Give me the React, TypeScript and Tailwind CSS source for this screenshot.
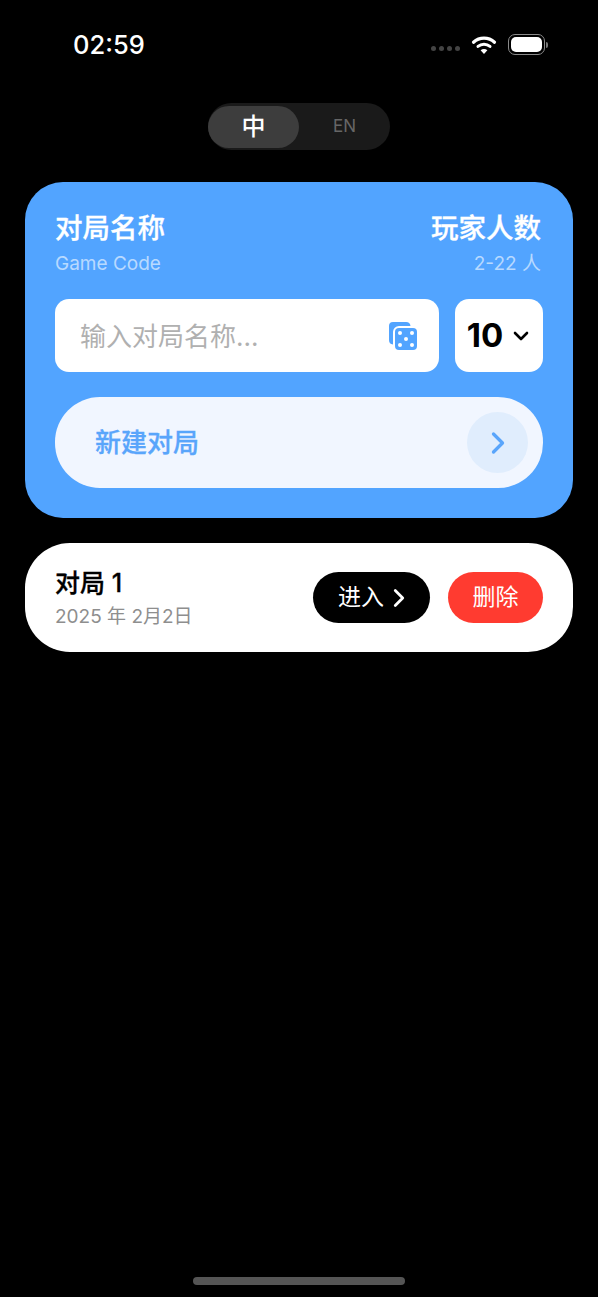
import { ChevronDown, ChevronRight } from "lucide-react";

const FONT = "font-['Inter','Noto_Sans_CJK_SC',sans-serif]";

function Wifi() {
  return (
    <svg width="26" height="20" viewBox="0 0 26 20" fill="none" stroke="white" strokeLinecap="round">
      <path d="M2.500 7.200C8.500 1.800 17.500 1.800 23.500 7.200" strokeWidth="3.200" />
      <path d="M7 11.400C10.500 8.400 15.500 8.400 19 11.400" strokeWidth="3" />
      <path d="M13 19L9.600 15.300C11.600 13.700 14.400 13.700 16.400 15.300Z" fill="white" stroke="none" />
    </svg>
  );
}

function Battery() {
  return (
    <div className="flex items-center">
      <div className="flex h-[21px] w-[37px] rounded-[7px] border border-[#8a8a8a] p-[2px]">
        <div className="flex-1 rounded-[5px] bg-white" />
      </div>
      <div className="ml-[1px] h-[6px] w-[2px] rounded-r-full bg-[#777]" />
    </div>
  );
}

function Dice() {
  return (
    <svg width="30" height="30" viewBox="0 0 30 30" fill="none">
      <path d="M5 1h13a4.500 4.500 0 0 1 4.500 4H11a6 6 0 0 0-6 6v12.500A4.500 4.500 0 0 1 1 19V5a4 4 0 0 1 4-4z" fill="#52a4ff" />
      <rect x="7" y="7" width="22" height="22" rx="4" fill="#52a4ff" />
      <circle cx="12" cy="12" r="2" fill="white" />
      <circle cx="24" cy="12" r="2" fill="white" />
      <circle cx="18" cy="18" r="2" fill="white" />
      <circle cx="12" cy="24" r="2" fill="white" />
      <circle cx="24" cy="24" r="2" fill="white" />
    </svg>
  );
}

export default function App() {
  return (
    <div className={`flex h-[1297px] w-full flex-col bg-black ${FONT}`}>
      {/* status bar */}
      <div className="flex h-[103px] items-start justify-between pl-[73px] pr-[50px] pt-[29px]">
        <span className="text-[25.500px] leading-[32px] font-medium text-white">02:59</span>
        <div className="flex items-center pt-[5px]">
          <div className="mr-[11px] mt-[8px] flex gap-[3px]">
            <span className="h-[5px] w-[5px] rounded-full bg-[#444]" />
            <span className="h-[5px] w-[5px] rounded-full bg-[#444]" />
            <span className="h-[5px] w-[5px] rounded-full bg-[#444]" />
            <span className="h-[5px] w-[5px] rounded-full bg-[#444]" />
          </div>
          <Wifi />
          <div className="ml-[11px]">
            <Battery />
          </div>
        </div>
      </div>

      {/* language toggle */}
      <div className="flex justify-center">
        <div className="flex h-[47px] w-[182px] items-center rounded-full bg-[#1a1a1a]">
          <div className="flex h-[42px] w-[91px] items-center justify-center rounded-full bg-[#3d3d3d] text-[24px] font-medium text-white">
            中
          </div>
          <div className="flex flex-1 items-center justify-center text-[17px] text-[#666]">EN</div>
        </div>
      </div>

      {/* create card */}
      <div className="mx-[25px] mt-[32px] h-[336px] rounded-[38px] bg-[#52a4ff] px-[30px] pt-[28px]">
        <div className="flex justify-between">
          <div>
            <div className="text-[27.500px] leading-[36px] font-medium text-white [-webkit-text-stroke:0.3px]">对局名称</div>
            <div className="mt-[5px] text-[19px] leading-[26px] text-white/60">Game Code</div>
          </div>
          <div className="pr-[2px] text-right">
            <div className="text-[27.500px] leading-[36px] font-medium text-white [-webkit-text-stroke:0.3px]">玩家人数</div>
            <div className="mt-[5px] text-[19px] leading-[26px] text-white/60">2-22 人</div>
          </div>
        </div>

        <div className="mt-[22px] flex gap-[16px]">
          <div className="flex h-[73px] flex-1 items-center justify-between rounded-[14px] bg-white pl-[25px] pr-[21px]">
            <span className="pt-[2px] text-[26px] text-[#b0b0b0]">输入对局名称...</span>
            <Dice />
          </div>
          <div className="flex h-[73px] w-[88px] items-center justify-center gap-[6px] rounded-[14px] bg-white pl-[2px]">
            <span className="text-[33px] font-bold text-black">10</span>
            <ChevronDown size={24} strokeWidth={2.600} className="text-black" />
          </div>
        </div>

        <div className="mt-[25px] flex h-[91px] items-center justify-between rounded-[45px] bg-[#f1f6ff] pl-[40px] pr-[15px]">
          <span className="text-[26px] font-medium text-[#59a5fb] [-webkit-text-stroke:0.3px]">新建对局</span>
          <div className="flex h-[61px] w-[61px] items-center justify-center rounded-full bg-[#e0edfd]">
            <ChevronRight size={36} strokeWidth={2.200} className="text-[#59a5fb]" />
          </div>
        </div>
      </div>

      {/* game list */}
      <div className="mx-[25px] mt-[25px] flex h-[109px] items-center justify-between rounded-[45px] bg-white pl-[30px] pr-[30px]">
        <div className="pt-[2px]">
          <div className="text-[25px] leading-[34px] font-medium text-black [-webkit-text-stroke:0.3px]">对局 1</div>
          <div className="pt-[2px] text-[19px] leading-[30px] text-[#8e8e8e]">2025 年 2月2日</div>
        </div>
        <div className="flex gap-[18px]">
          <div className="flex h-[51px] w-[117px] items-center justify-center rounded-full bg-black pl-[9px] text-[23px] text-white">
            进入
            <ChevronRight size={30} strokeWidth={2.200} className="text-white" />
          </div>
          <div className="flex h-[51px] w-[95px] items-center justify-center rounded-full bg-[#ff3b30] text-[23px] text-white">
            删除
          </div>
        </div>
      </div>

      {/* home indicator */}
      <div className="mt-auto mb-[12px] flex justify-center">
        <div className="h-[8px] w-[212px] rounded-full bg-[#555]" />
      </div>
    </div>
  );
}
